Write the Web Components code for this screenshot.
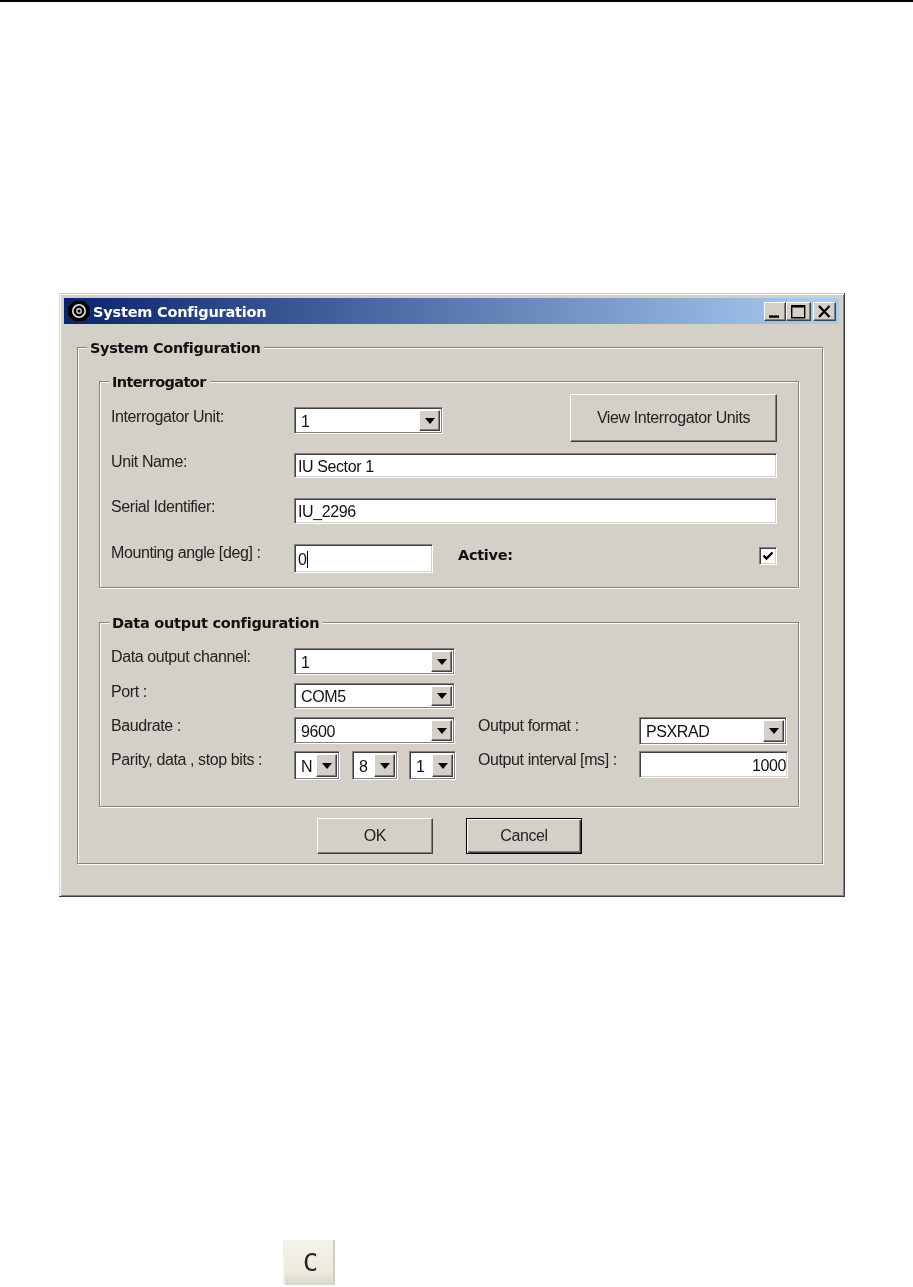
<!DOCTYPE html>
<html>
<head>
<meta charset="utf-8">
<title>System Configuration</title>
<style>
    html, body { margin: 0; padding: 0; background: #fff; }
    body { width: 913px; height: 1287px; overflow: hidden; font-family: "Liberation Sans", Arial, sans-serif; }
    .row { display: flex; }
    page-rule { margin-bottom: 291px; }
    sys-window { margin-left: 59px; }
    corner-key { margin: 343px 0 0 283px; }
</style>
</head>
<body>
<page-rule></page-rule>

<sys-window caption="System Configuration">
    <group-box label="System Configuration" style="--legend-ls:-0.35px;margin:23px 0 0 13px;width:746px;height:517px;padding:33px 0 0 21px">
        <group-box label="Interrogator" style="--legend-ls:-0.6px;width:700px;height:207px;padding:12px 0 0 11px">
            <form-row style="height:48px">
                <field-label style="width:183px;padding-top:14px">Interrogator Unit:</field-label>
                <combo-box value="1" style="width:149px;height:27px;margin-top:13px"></combo-box>
                <push-button style="width:207px;height:48px;margin-left:127px">View Interrogator Units</push-button>
            </form-row>
            <form-row style="height:25px;margin-top:11px">
                <field-label style="width:183px">Unit Name:</field-label>
                <text-box value="IU Sector 1" style="width:483px;height:25px"></text-box>
            </form-row>
            <form-row style="height:26px;margin-top:20px">
                <field-label style="width:183px">Serial Identifier:</field-label>
                <text-box value="IU_2296" style="width:483px;height:26px"></text-box>
            </form-row>
            <form-row style="height:29px;margin-top:20px">
                <field-label style="width:183px">Mounting angle [deg] :</field-label>
                <text-box value="0" caret style="width:139px;height:29px"></text-box>
                <field-label bold style="width:301px;margin-left:25px;padding-top:2px">Active:</field-label>
                <check-mark style="margin-top:3px"></check-mark>
            </form-row>
        </group-box>
        <group-box label="Data output configuration" style="--legend-ls:-0.25px;width:700px;height:185px;margin-top:34px;padding:25px 0 0 11px">
            <form-row style="height:27px">
                <field-label style="width:183px">Data output channel:</field-label>
                <combo-box value="1" style="width:161px;height:27px"></combo-box>
            </form-row>
            <form-row style="height:26px;margin-top:8px">
                <field-label style="width:183px">Port :</field-label>
                <combo-box value="COM5" style="width:161px;height:26px"></combo-box>
            </form-row>
            <form-row style="height:27px;margin-top:8px">
                <field-label style="width:183px">Baudrate :</field-label>
                <combo-box value="9600" style="width:161px;height:27px"></combo-box>
                <field-label style="width:161px;margin-left:23px">Output format :</field-label>
                <combo-box value="PSXRAD" style="width:148px;height:28px"></combo-box>
            </form-row>
            <form-row style="height:29px;margin-top:7px">
                <field-label style="width:183px">Parity, data , stop bits :</field-label>
                <combo-box value="N" style="width:46px;height:29px"></combo-box>
                <combo-box value="8" style="width:46px;height:29px;margin-left:12px"></combo-box>
                <combo-box value="1" style="width:47px;height:29px;margin-left:11px"></combo-box>
                <field-label style="width:161px;margin-left:22px">Output interval [ms] :</field-label>
                <text-box value="1000" align="right" style="width:149px;height:27px"></text-box>
            </form-row>
        </group-box>
        <div class="row" style="margin:11px 0 0 218px;gap:33px">
            <push-button style="width:116px;height:36px">OK</push-button>
            <push-button default style="width:116px;height:36px">Cancel</push-button>
        </div>
    </group-box>
</sys-window>

<corner-key>C</corner-key>

<script>
// Thin rule at the very top of the page
class PageRule extends HTMLElement {
    constructor() {
        super();
        this.attachShadow({ mode: 'open' });
        this.shadowRoot.innerHTML = `<style>:host { display: block; height: 2px; background: #000; }</style>`;
    }
}

// Dialog frame with caption bar
class SysWindow extends HTMLElement {
    constructor() {
        super();
        this.attachShadow({ mode: 'open' });
    }

    connectedCallback() {
        const caption = this.getAttribute('caption') || '';
        this.shadowRoot.innerHTML = `
            <style>
                :host {
                    display: block;
                    box-sizing: border-box;
                    width: 786px;
                    height: 604px;
                    padding: 5px;
                    background: #d4d0c8;
                    border-right: 1px solid #404040;
                    border-bottom: 1px solid #404040;
                    box-shadow: inset 1px 1px 0 #d4d0c8, inset 2px 2px 0 #fff, inset -1px -1px 0 #808080;
                    filter: blur(0.5px);
                    color: #111;
                }
                .bar {
                    display: flex;
                    align-items: center;
                    height: 26px;
                    padding: 0 3px 0 4px;
                    background: linear-gradient(90deg, #0a246a 0%, #a6caf0 97%);
                }
                .bar svg.app { flex: none; width: 22px; height: 20px; margin-right: 3px; }
                .title {
                    flex: 1;
                    padding-top: 2px;
                    font: bold 14.5px "DejaVu Sans", Tahoma, sans-serif;
                    letter-spacing: -0.2px;
                    color: #fff;
                }
                .cap {
                    box-sizing: border-box;
                    display: flex;
                    flex: none;
                    width: 22px;
                    height: 19px;
                    background: #d4d0c8;
                    border: 1px solid;
                    border-color: #fff #404040 #404040 #fff;
                    box-shadow: inset -1px -1px 0 #808080;
                }
                .cap svg { width: 100%; height: 100%; }
                .cap.max { width: 25px; }
                .cap.close { width: 23px; margin-left: 2px; }
            </style>
            <div class="bar">
                <svg class="app" viewBox="0 0 22 20">
                    <path d="M6 0h10l6 6v8l-6 6H6l-6-6V6z" fill="#000"/>
                    <circle cx="11" cy="10" r="6.2" fill="none" stroke="#e8e8e8" stroke-width="1.6"/>
                    <circle cx="11" cy="10" r="2.2" fill="none" stroke="#d0d0d0" stroke-width="1.4"/>
                </svg>
                <span class="title">${caption}</span>
                <div class="cap"><svg viewBox="0 0 20 17"><rect x="4" y="12.4" width="10" height="2.4" fill="#000"/></svg></div>
                <div class="cap max"><svg viewBox="0 0 23 17"><path d="M4.7 2.7h13v12h-13z M4.7 3.8h13" fill="none" stroke="#000" stroke-width="1.4"/></svg></div>
                <div class="cap close"><svg viewBox="0 0 21 17"><path d="M5 3l10.5 11M15.5 3L5 14" stroke="#000" stroke-width="2.2" fill="none"/></svg></div>
            </div>
            <slot></slot>
        `;
    }
}

// Etched group box, the legend sits over its top edge
class GroupBox extends HTMLElement {
    constructor() {
        super();
        this.attachShadow({ mode: 'open' });
    }

    connectedCallback() {
        const label = this.getAttribute('label') || '';
        this.shadowRoot.innerHTML = `
            <style>
                :host {
                    display: block;
                    position: relative;
                    box-sizing: border-box;
                    border: 1px solid #85837e;
                    box-shadow: 1px 1px 0 #fff, inset 1px 1px 0 #fff;
                }
                .legend {
                    position: absolute;
                    left: 9px;
                    top: -9px;
                    padding: 0 4px 0 3px;
                    background: #d4d0c8;
                    font: bold 14.5px/18px "DejaVu Sans", Tahoma, sans-serif;
                    letter-spacing: var(--legend-ls, -0.3px);
                    white-space: nowrap;
                    color: #111;
                }
            </style>
            <div class="legend">${label}</div>
            <slot></slot>
        `;
    }
}

class FormRow extends HTMLElement {
    constructor() {
        super();
        this.attachShadow({ mode: 'open' });
        this.shadowRoot.innerHTML = `
            <style>:host { display: flex; align-items: flex-start; }</style>
            <slot></slot>
        `;
    }
}

class FieldLabel extends HTMLElement {
    constructor() {
        super();
        this.attachShadow({ mode: 'open' });
        this.shadowRoot.innerHTML = `
            <style>
                :host {
                    display: block;
                    flex: none;
                    box-sizing: border-box;
                    font: 16px/18px "Liberation Sans", Arial, sans-serif;
                    letter-spacing: -0.4px;
                    color: #222;
                    white-space: nowrap;
                }
                :host([bold]) {
                    font: bold 14.5px/18px "DejaVu Sans", Tahoma, sans-serif;
                    letter-spacing: -0.3px;
                    color: #111;
                }
            </style>
            <slot></slot>
        `;
    }
}

// Sunken edit field
class TextBox extends HTMLElement {
    constructor() {
        super();
        this.attachShadow({ mode: 'open' });
    }

    connectedCallback() {
        const value = this.getAttribute('value') || '';
        const caret = this.hasAttribute('caret') ? '<i></i>' : '';
        this.shadowRoot.innerHTML = `
            <style>
                :host {
                    display: flex;
                    flex: none;
                    align-items: center;
                    box-sizing: border-box;
                    padding: 2px 1px 0 3px;
                    background: #fff;
                    border: 1px solid;
                    border-color: #808080 #fff #fff #808080;
                    box-shadow: inset 1px 1px 0 #404040, inset -1px -1px 0 #d4d0c8;
                    font: 16px/18px "Liberation Sans", Arial, sans-serif;
                    letter-spacing: -0.4px;
                    color: #111;
                }
                :host([align=right]) { justify-content: flex-end; }
                i { display: block; width: 1px; height: 17px; background: #000; }
            </style>
            <span>${value}</span>${caret}
        `;
    }
}

// Drop-down list with its arrow button
class ComboBox extends HTMLElement {
    constructor() {
        super();
        this.attachShadow({ mode: 'open' });
    }

    connectedCallback() {
        const value = this.getAttribute('value') || '';
        this.shadowRoot.innerHTML = `
            <style>
                :host {
                    display: flex;
                    flex: none;
                    align-items: center;
                    box-sizing: border-box;
                    padding: 2px 2px 2px 6px;
                    background: #fff;
                    border: 1px solid;
                    border-color: #808080 #fff #fff #808080;
                    box-shadow: inset 1px 1px 0 #404040, inset -1px -1px 0 #808080;
                    font: 16px/18px "Liberation Sans", Arial, sans-serif;
                    letter-spacing: -0.4px;
                    color: #111;
                }
                span { flex: 1; padding-top: 2px; }
                .arrow {
                    flex: none;
                    display: flex;
                    align-items: center;
                    justify-content: center;
                    box-sizing: border-box;
                    align-self: stretch;
                    width: 21px;
                    background: #d4d0c8;
                    border: 1px solid;
                    border-color: #fff #404040 #404040 #fff;
                    box-shadow: inset -1px -1px 0 #808080;
                }
                .arrow svg { width: 10px; height: 6px; }
            </style>
            <span>${value}</span>
            <div class="arrow"><svg viewBox="0 0 10 6"><path d="M0 0h10L5 6z" fill="#000"/></svg></div>
        `;
    }
}

class PushButton extends HTMLElement {
    constructor() {
        super();
        this.attachShadow({ mode: 'open' });
        this.shadowRoot.innerHTML = `
            <style>
                :host {
                    display: flex;
                    flex: none;
                    align-items: center;
                    justify-content: center;
                    box-sizing: border-box;
                    background: #d4d0c8;
                    border: 1px solid;
                    border-color: #fff #404040 #404040 #fff;
                    box-shadow: inset -1px -1px 0 #808080;
                    font: 16px/18px "Liberation Sans", Arial, sans-serif;
                    letter-spacing: -0.4px;
                    color: #222;
                }
                :host([default]) {
                    border-color: #000;
                    box-shadow: inset 1px 1px 0 #fff, inset -1px -1px 0 #404040, inset -2px -2px 0 #808080;
                }
            </style>
            <slot></slot>
        `;
    }
}

class CheckMark extends HTMLElement {
    constructor() {
        super();
        this.attachShadow({ mode: 'open' });
        this.shadowRoot.innerHTML = `
            <style>
                :host {
                    display: block;
                    flex: none;
                    box-sizing: border-box;
                    width: 18px;
                    height: 18px;
                    background: #fff;
                    border: 1px solid;
                    border-color: #808080 #fff #fff #808080;
                    box-shadow: inset 1px 1px 0 #404040, inset -1px -1px 0 #d4d0c8;
                }
                svg { display: block; width: 16px; height: 16px; }
            </style>
            <svg viewBox="0 0 16 16"><path d="M3.5 7.5l3 3 6-6" fill="none" stroke="#000" stroke-width="2.4"/></svg>
        `;
    }
}

// Small toolbar key at the bottom of the page
class CornerKey extends HTMLElement {
    constructor() {
        super();
        this.attachShadow({ mode: 'open' });
        this.shadowRoot.innerHTML = `
            <style>
                :host {
                    display: flex;
                    align-items: center;
                    justify-content: center;
                    box-sizing: border-box;
                    width: 52px;
                    height: 45px;
                    padding-left: 3px;
                    background: linear-gradient(180deg, #f4f3ea 0%, #eceadd 70%, #d9d7c9 100%);
                    border-right: 2px solid #d0cec0;
                    border-left: 2px solid #f2f1e8;
                    filter: blur(0.4px);
                    font: 25px/26px "DejaVu Sans Mono", "Liberation Mono", monospace;
                    color: #222;
                }
            </style>
            <slot></slot>
        `;
    }
}

customElements.define('page-rule', PageRule);
customElements.define('sys-window', SysWindow);
customElements.define('group-box', GroupBox);
customElements.define('form-row', FormRow);
customElements.define('field-label', FieldLabel);
customElements.define('text-box', TextBox);
customElements.define('combo-box', ComboBox);
customElements.define('push-button', PushButton);
customElements.define('check-mark', CheckMark);
customElements.define('corner-key', CornerKey);
</script>
</body>
</html>
